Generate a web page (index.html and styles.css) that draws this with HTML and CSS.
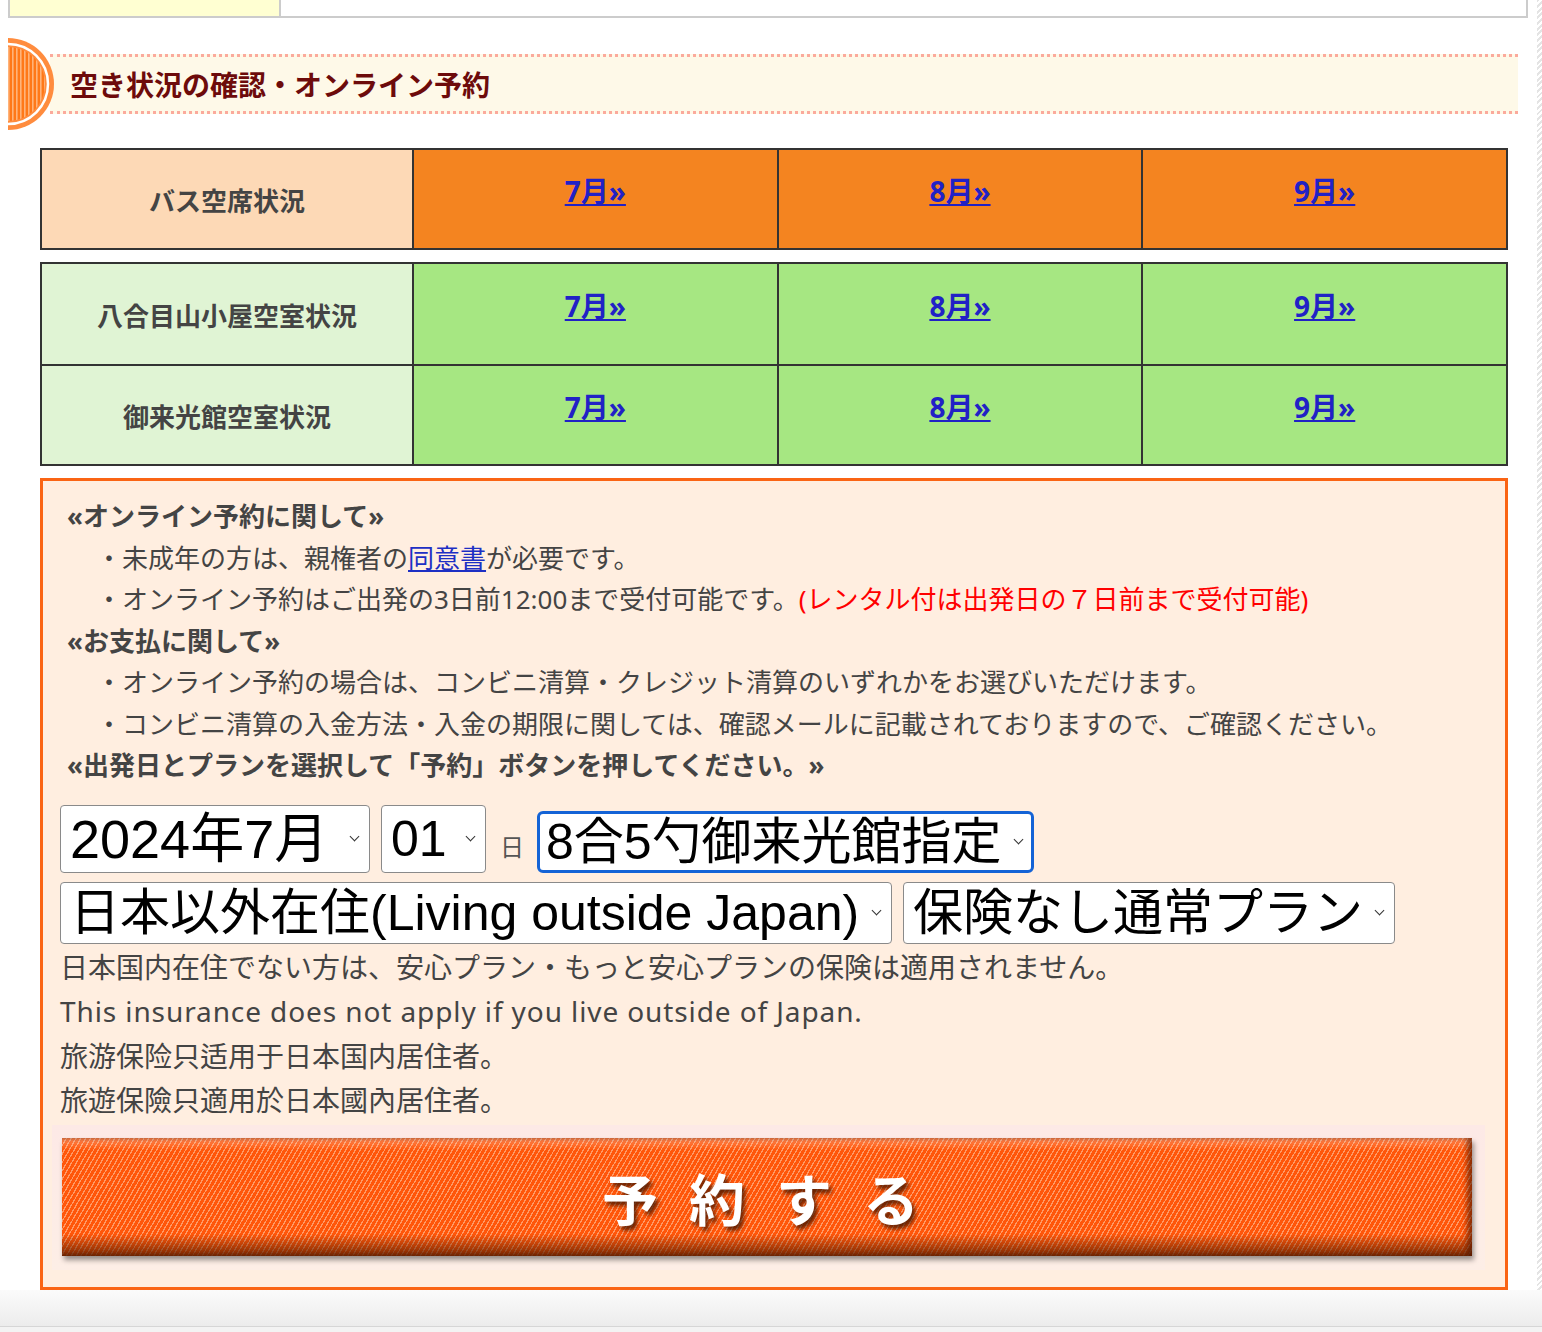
FILE: index.html
```html
<!DOCTYPE html>
<html lang="ja">
<head>
    <meta charset="UTF-8">
    <meta content="width=device-width, initial-scale=1.0" name="viewport">
    <link rel="stylesheet" href="styles.css">
    <title>空き状況の確認・オンライン予約</title>
</head>
<body>

<div class="wrap">
    <div class="page">
        <!-- end of the table above -->
        <div class="top-box">
            <div class="top-left"></div>
            <div class="top-right"></div>
        </div>

        <!-- Section title -->
        <h2 class="title">
            <svg class="title-mark" width="48" height="92" viewBox="0 0 48 92" xmlns="http://www.w3.org/2000/svg">
                <defs>
                    <pattern id="stripe" width="4" height="4" patternUnits="userSpaceOnUse">
                        <rect width="4" height="4" fill="#ff7818"/>
                        <rect width="1.6" height="4" fill="#ffb37a"/>
                    </pattern>
                </defs>
                <path d="M0 0 A46 46 0 0 1 0 92 Z" fill="#ff8c3e"/>
                <path d="M0 6 A40 40 0 0 1 0 86" fill="none" stroke="#fff" stroke-width="2.5"/>
                <path d="M0 9 A37 37 0 0 1 0 83 Z" fill="url(#stripe)"/>
            </svg>
            <span class="title-band">空き状況の確認・オンライン予約</span>
        </h2>

        <!-- Bus -->
        <table class="status status-bus">
            <tr>
                <th>バス空席状況</th>
                <td><a href="#">7月»</a></td>
                <td><a href="#">8月»</a></td>
                <td><a href="#">9月»</a></td>
            </tr>
        </table>

        <!-- Rooms -->
        <table class="status status-room">
            <tr>
                <th>八合目山小屋空室状況</th>
                <td><a href="#">7月»</a></td>
                <td><a href="#">8月»</a></td>
                <td><a href="#">9月»</a></td>
            </tr>
            <tr>
                <th>御来光館空室状況</th>
                <td><a href="#">7月»</a></td>
                <td><a href="#">8月»</a></td>
                <td><a href="#">9月»</a></td>
            </tr>
        </table>

        <!-- Reservation form -->
        <form class="reserve">
            <div class="notes">
                <p class="note-head">«オンライン予約に関して»</p>
                <p class="note-item">・未成年の方は、親権者の<a href="#">同意書</a>が必要です。</p>
                <p class="note-item">・オンライン予約はご出発の3日前12:00まで受付可能です。<span class="red">(レンタル付は出発日の７日前まで受付可能)</span></p>
                <p class="note-head">«お支払に関して»</p>
                <p class="note-item">・オンライン予約の場合は、コンビニ清算・クレジット清算のいずれかをお選びいただけます。</p>
                <p class="note-item">・コンビニ清算の入金方法・入金の期限に関しては、確認メールに記載されておりますので、ご確認ください。</p>
                <p class="note-head">«出発日とプランを選択して「予約」ボタンを押してください。»</p>
            </div>

            <div class="pick-row">
                <span class="sel sel-month">
                    <select>
                        <option>2024年7月</option>
                        <option>2024年8月</option>
                        <option>2024年9月</option>
                    </select>
                </span>
                <span class="sel sel-day">
                    <select>
                        <option>01</option>
                        <option>02</option>
                        <option>03</option>
                    </select>
                </span>
                <span class="day-unit">日</span>
                <span class="sel sel-plan is-focused">
                    <select>
                        <option>8合5勺御来光館指定</option>
                        <option>八合目山小屋指定</option>
                    </select>
                </span>
            </div>
            <div class="pick-row">
                <span class="sel sel-home">
                    <select>
                        <option>日本以外在住(Living outside Japan)</option>
                        <option>日本国内在住</option>
                    </select>
                </span>
                <span class="sel sel-ins">
                    <select>
                        <option>保険なし通常プラン</option>
                        <option>安心プラン</option>
                        <option>もっと安心プラン</option>
                    </select>
                </span>
            </div>

            <div class="caveat">
                <p>日本国内在住でない方は、安心プラン・もっと安心プランの保険は適用されません。</p>
                <p class="caveat-en">This insurance does not apply if you live outside of Japan.</p>
                <p>旅游保险只适用于日本国内居住者。</p>
                <p>旅遊保險只適用於日本國內居住者。</p>
            </div>

            <div class="submit">
                <button class="submit-face" type="submit">予約する</button>
            </div>
        </form>
    </div>
    <div class="edge"></div>
</div>
<div class="page-foot"></div>

</body>
</html>
```

FILE: styles.css
```css
body {
    margin: 0;
    background: #fff;
    color: #444;
    font-family: "Noto Sans", "Noto Sans CJK JP", sans-serif;
}

.wrap {
    display: flex;
}

.page {
    width: 1537px;
    padding-left: 8px;
    box-sizing: border-box;
}

.edge {
    flex: 1;
    background: repeating-linear-gradient(135deg, #e4e4e4 0 2px, #fff 2px 4px);
}

/* Bottom of the table above */
.top-box {
    display: flex;
    width: 1516px;
    height: 16px;
    border: 2px solid #ccc;
    border-top: 0;
}

.top-left {
    width: 269px;
    background: #ffffd2;
    border-right: 2px solid #ccc;
}

/* Section title */
.title {
    display: flex;
    align-items: center;
    height: 92px;
    margin: 20px 0 18px;
    font-size: 28px;
    font-weight: bold;
}

.title-mark {
    position: relative;
    z-index: 1;
    flex: none;
}

.title-band {
    flex: 1;
    height: 54px;
    margin: 0 19px 0 -6px;
    padding-left: 20px;
    line-height: 54px;
    background: #fef9e8;
    border-top: 3px dotted #fbaa9c;
    border-bottom: 3px dotted #fbaa9c;
    color: #6d0b0b;
    font-family: "Noto Sans CJK JP", sans-serif;
}

/* Availability tables */
.status {
    width: 1468px;
    margin-left: 32px;
    border: 2px solid #333;
    border-spacing: 0;
    table-layout: fixed;
}

.status th,
.status td {
    padding: 0;
    text-align: center;
    vertical-align: middle;
    border-left: 2px solid #333;
}

.status th {
    width: 370px;
    border-left: 0;
    font-size: 26px;
    font-weight: bold;
    color: #444;
    font-family: "Noto Sans CJK JP", sans-serif;
}

.status td {
    padding-bottom: 18px;
}

.status a {
    color: #2121c6;
    font-size: 28px;
    font-weight: bold;
    font-family: "Noto Sans", "Noto Sans CJK JP", sans-serif;
}

.status-bus tr {
    height: 98px;
}

.status-bus th {
    background: #fdd9b6;
}

.status-bus td {
    background: #f48420;
}

.status-room {
    margin-top: 12px;
}

.status-room tr {
    height: 100px;
}

.status-room tr + tr th,
.status-room tr + tr td {
    border-top: 2px solid #333;
}

.status-room th {
    background: #e0f4d4;
}

.status-room td {
    background: #a6e782;
}

/* Reservation box */
.reserve {
    width: 1468px;
    margin: 12px 0 0 32px;
    padding: 15px 17px 17px;
    box-sizing: border-box;
    border: 3px solid #fa6414;
    background: #ffeee0;
}

.notes {
    padding-left: 7px;
    font-size: 26px;
    line-height: 41.5px;
}

.notes p {
    margin: 0;
}

.note-head {
    font-weight: bold;
}

.note-item {
    padding-left: 29px;
}

.notes a {
    color: #1d2fc4;
}

.red {
    color: #f00;
}

/* Selects */
.pick-row {
    display: flex;
    align-items: flex-end;
    gap: 11px;
    margin-top: 9px;
}

.notes + .pick-row {
    margin-top: 18px;
}

.sel {
    position: relative;
    display: block;
    height: 62px;
}

.sel select {
    appearance: none;
    -webkit-appearance: none;
    width: 100%;
    height: 100%;
    margin: 0;
    padding: 0 28px 0 9px;
    box-sizing: border-box;
    border: 1px solid #8a8a8a;
    border-radius: 4px;
    background: #fff;
    color: #000;
    font-size: 50px;
    font-family: "Liberation Sans", "Noto Sans CJK JP", sans-serif;
}

.sel::after {
    content: "";
    position: absolute;
    right: 12px;
    top: 50%;
    width: 6px;
    height: 6px;
    margin-top: -6px;
    border-right: 1.5px solid #333;
    border-bottom: 1.5px solid #333;
    transform: rotate(45deg);
    pointer-events: none;
}

.sel-month {
    width: 310px;
    height: 68px;
}

.sel-month select {
    font-size: 54px;
}

.sel-day {
    width: 105px;
    height: 68px;
}

.day-unit {
    margin: 0 2px 10px 3px;
    font-size: 24px;
    color: #555;
    font-family: "Noto Sans CJK JP", sans-serif;
}

.sel-plan {
    width: 497px;
}

.sel-plan.is-focused select {
    border: 3px solid #1463d6;
    border-radius: 6px;
    padding-left: 6px;
}

.sel-home {
    width: 832px;
}

.sel-ins {
    width: 492px;
}

/* Insurance caveat */
.caveat {
    margin-top: 1px;
    font-size: 28px;
    line-height: 44.6px;
}

.caveat p {
    margin: 0;
}

.caveat-en {
    letter-spacing: 0.9px;
}

/* Submit button */
.submit {
    width: 1433px;
    margin: 2px 0 0 -8px;
    padding: 13px 13px 14px 10px;
    box-sizing: border-box;
    background: linear-gradient(#fde9e6, #fdeee6);
}

.submit-face {
    display: block;
    width: 100%;
    height: 118px;
    padding: 0 0 0 18px;
    border: 0;
    background:
        linear-gradient(to bottom, rgba(255, 255, 255, 0.3), rgba(255, 255, 255, 0) 12px, rgba(0, 0, 0, 0) 96px, rgba(90, 30, 0, 0.8)),
        repeating-linear-gradient(-60deg, #ff560a 0 3px, #ff9a66 3px 4.2px);
    box-shadow: inset -5px 0 5px rgba(70, 20, 0, 0.6), 2px 4px 5px rgba(0, 0, 0, 0.4);
    color: #fff;
    font-size: 56px;
    font-weight: bold;
    letter-spacing: 31px;
    font-family: "Noto Sans CJK JP", sans-serif;
    text-shadow: 3px 4px 4px rgba(60, 20, 0, 0.8);
    cursor: pointer;
}

.page-foot {
    height: 42px;
    background: linear-gradient(to bottom, #fbfbfb 0, #ececec 36px, #d6d6d6 36px, #d6d6d6 37px, #f3f3f3 37px);
}
```
